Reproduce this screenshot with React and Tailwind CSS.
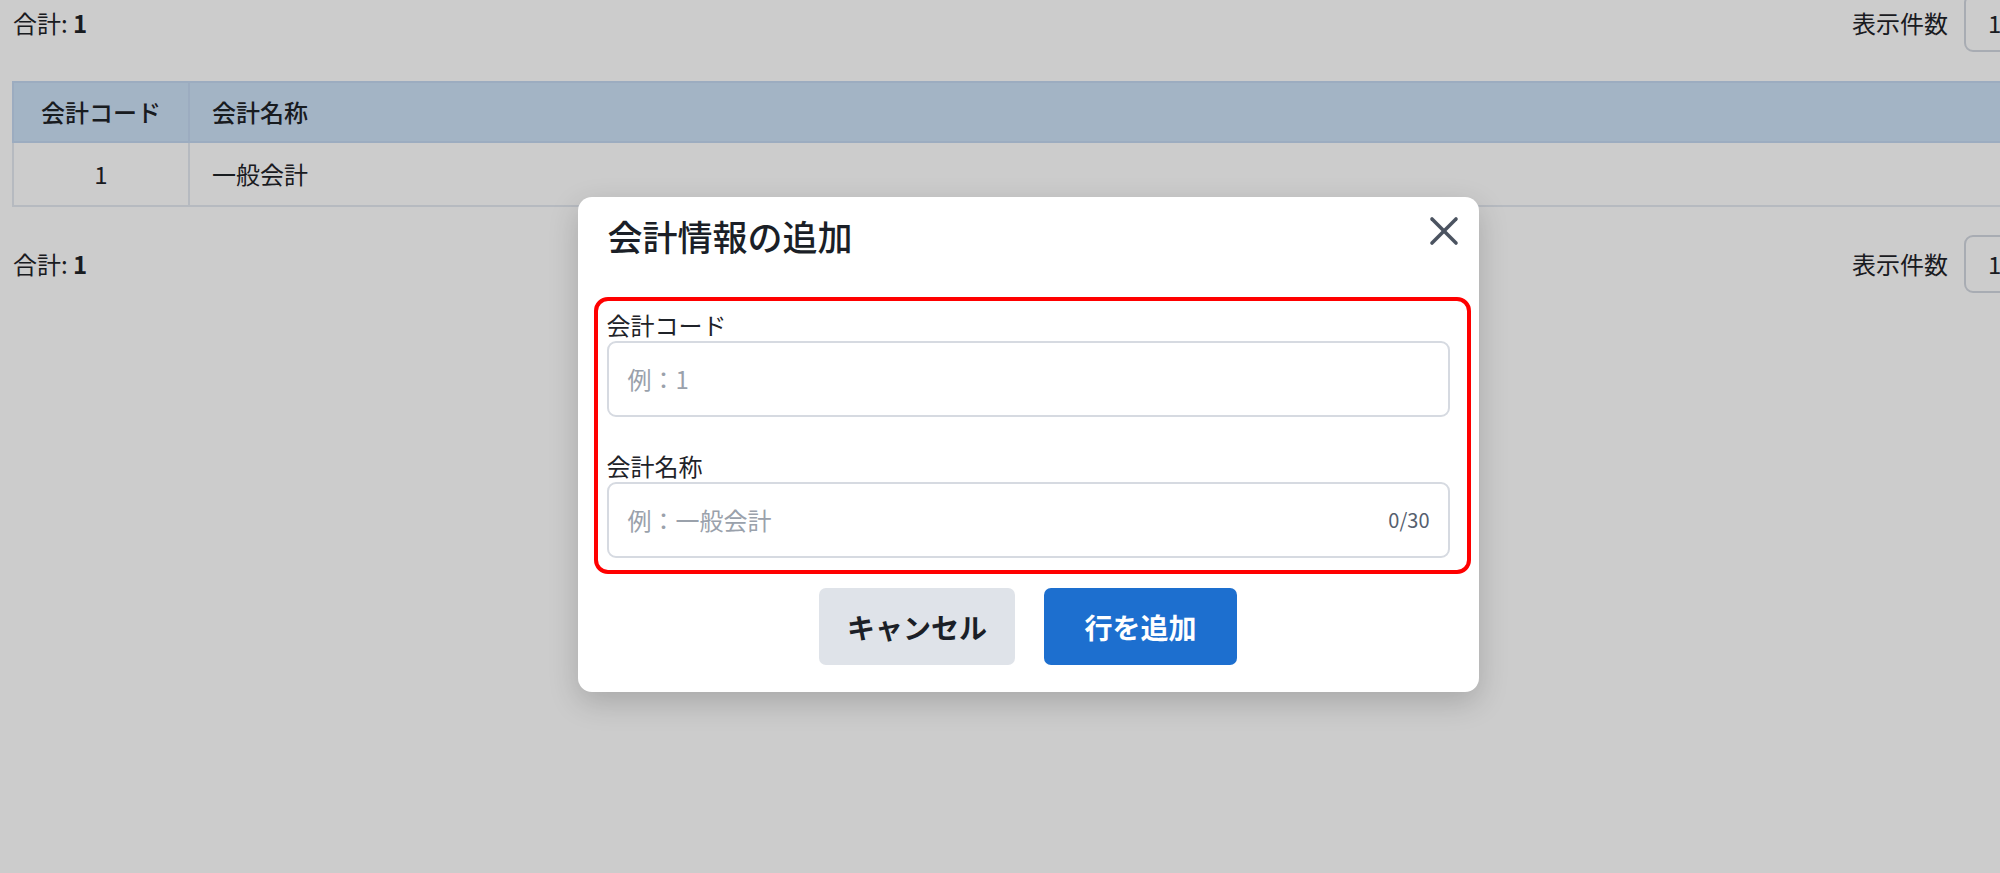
import { X } from 'lucide-react'

const PAGE_SIZE = 1

function Totals({ count }) {
  return (
    <div className="flex h-[58px] items-center justify-between">
      <p className="pl-px text-[24px]">
        合計: <span className="font-bold">{count}</span>
      </p>
      <div className="flex items-center gap-4 text-[24px]">
        <span>表示件数</span>
        <div className="flex h-[58px] w-[80px] items-center rounded-[9px] border-2 border-[#d3d8e0] bg-white pl-[22px]">
          {PAGE_SIZE}
        </div>
      </div>
    </div>
  )
}

function Field({ label, placeholder, counter }) {
  return (
    <div>
      <label className="block text-[24px] leading-[29px] text-[#1f2329]">{label}</label>
      <div className="mt-[2px] flex h-[76px] items-center justify-between rounded-[9px] border-2 border-[#d6dae1] bg-white pl-[19px] pr-[18px]">
        <span className="text-[24px] text-[#9aa1ab]">{placeholder}</span>
        {counter && <span className="text-[20px] text-[#56606e]">{counter}</span>}
      </div>
    </div>
  )
}

export default function App() {
  return (
    <div className="relative h-[873px] w-[2000px] overflow-hidden bg-white font-['Noto_Sans_CJK_JP','Noto_Sans',sans-serif] text-[#1f2329]">
      {/* ── list page ── */}
      <div className="-mt-[6px] w-[2056px] px-3">
        <Totals count={1} />

        <table className="mt-[29px] w-full border-collapse text-[24px]">
          <thead>
            <tr className="h-[60px] bg-[#cce1f7]">
              <th className="w-[176px] border-2 border-[#c4d8f1] text-center font-medium">会計コード</th>
              <th className="border-2 border-[#c4d8f1] pl-[22px] text-left font-medium">会計名称</th>
            </tr>
          </thead>
          <tbody>
            <tr className="h-[64px]">
              <td className="border-2 border-[#e4e9f1] text-center">1</td>
              <td className="border-2 border-[#e4e9f1] pl-[22px]">一般会計</td>
            </tr>
          </tbody>
        </table>

        <div className="mt-[28px]">
          <Totals count={1} />
        </div>
      </div>

      {/* ── add dialog ── */}
      <div className="absolute inset-y-0 left-0 flex w-[2056px] items-start justify-center bg-black/20">
        <div className="mt-[197px] w-[901px] rounded-[14px] bg-white px-[29px] pt-[15px] pb-[27px] shadow-[0_10px_30px_rgba(0,0,0,0.18)]">
          <div className="flex items-start justify-between">
            <h2 className="pl-px text-[35px] leading-[48px] font-medium text-[#1b1f27]">会計情報の追加</h2>
            <button className="-mt-[5px] -mr-[18px] text-[#4b5360]">
              <X size={48} strokeWidth={1.8} />
            </button>
          </div>

          <div className="mt-[37px] -ml-[13px] -mr-[21px] rounded-[14px] border-4 border-[#ff0000] pt-[9px] pb-[12px] pl-[9px] pr-[17px]">
            <Field label="会計コード" placeholder="例：1" />
            <div className="mt-[34px]">
              <Field label="会計名称" placeholder="例：一般会計" counter="0/30" />
            </div>
          </div>

          <div className="mt-[14px] flex justify-center gap-[29px] text-[28px] font-bold">
            <button className="h-[77px] w-[196px] rounded-[7px] bg-[#dfe3e9] text-[#1b1f27]">キャンセル</button>
            <button className="h-[77px] w-[193px] rounded-[7px] bg-[#1d6fcf] text-white">行を追加</button>
          </div>
        </div>
      </div>
    </div>
  )
}
